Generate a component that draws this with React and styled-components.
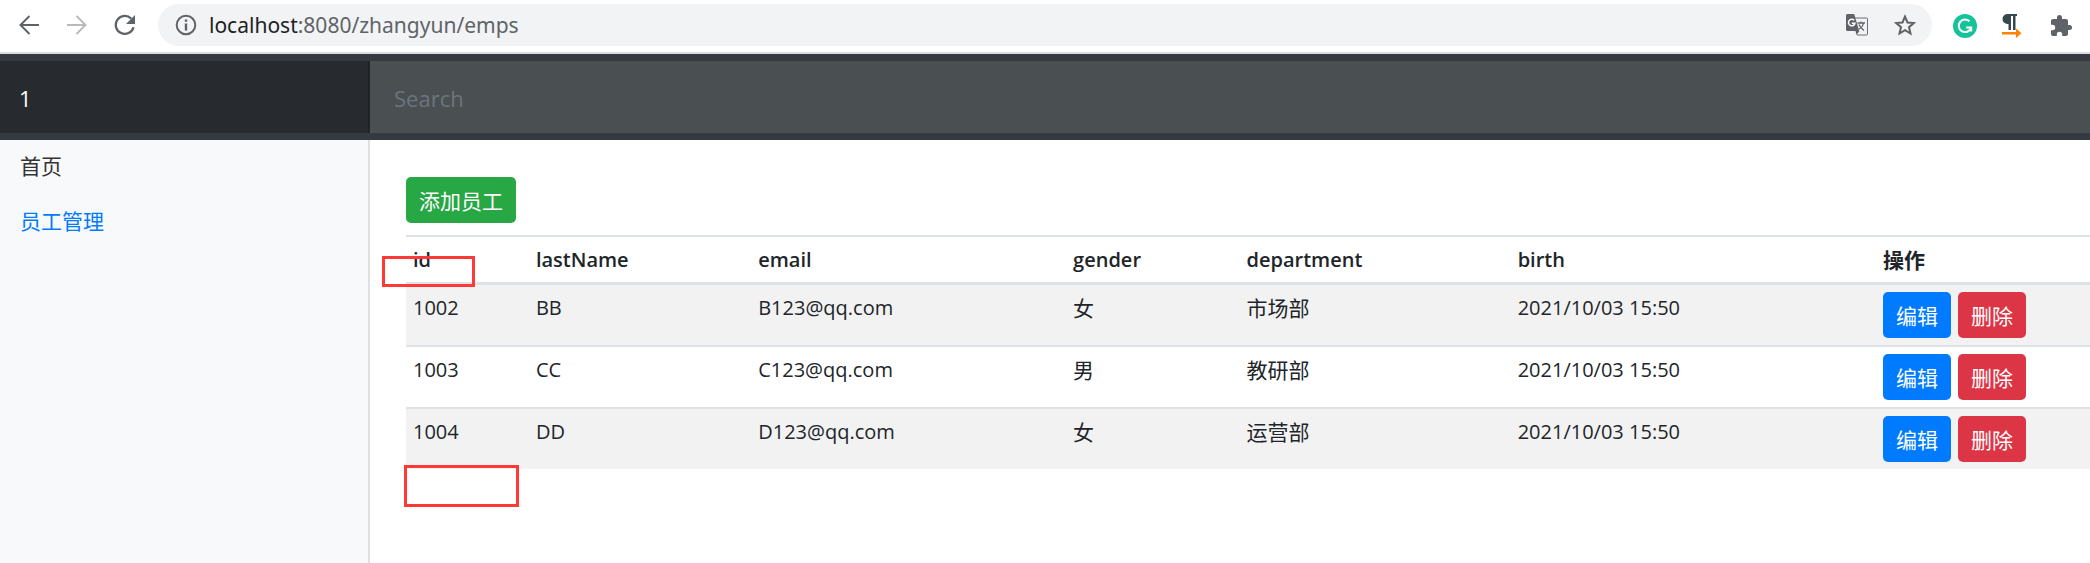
import React from "react";
import styled, { createGlobalStyle } from "styled-components";

const GlobalStyle = createGlobalStyle`
  *, *::before, *::after { box-sizing: border-box; }
  body {
    margin: 0;
    background: #fff;
    color: #212529;
    font-family: "Open Sans", "Noto Sans CJK SC", sans-serif;
    font-size: 20px;
    line-height: 32px;
  }
  #root { min-height: 100vh; display: flex; flex-direction: column; }
  button, input { font: inherit; }
`;

const BrowserBar = styled.header`
  display: flex;
  align-items: center;
  height: 54px;
  padding: 4px 19px 6px 18px;
  border-bottom: 2px solid #dadce4;
`;

const IconButton = styled.button`
  display: grid;
  place-items: center;
  flex: none;
  width: 22px;
  height: 22px;
  padding: 0;
  border: 0;
  background: none;
  color: ${(p) => (p.$muted ? "#bababa" : "#5f6368")};
  svg { display: block; flex: none; }
`;

const ButtonGroup = styled.div`
  display: flex;
  align-items: center;
  gap: 26px;
`;

const AddressBar = styled.form`
  display: flex;
  align-items: center;
  flex: 1;
  height: 42px;
  margin: 0 21px 0 22px;
  padding: 0 16px 0 17px;
  border-radius: 21px;
  background: #f1f3f4;
`;

const Address = styled.div`
  flex: 1;
  margin-left: 12px;
  font-family: "Noto Sans", sans-serif;
  font-size: 21px;
  color: #5f6368;
`;

const Host = styled.span`
  color: #202124;
`;

const Navbar = styled.nav`
  display: flex;
  padding: 7px 0;
  background: #343a40;
`;

const Brand = styled.a`
  flex: 0 0 370px;
  display: flex;
  align-items: center;
  padding: 2px 19px 0;
  border-right: 2px solid #212529;
  background: #272b30;
  color: #fff;
  font-size: 22px;
  text-decoration: none;
`;

const SearchInput = styled.input`
  flex: 1;
  min-width: 0;
  height: 72px;
  padding: 2px 24px 0;
  border: 0;
  outline: 0;
  background: #4a4f52;
  color: #fff;
  font-size: 22px;
  &::placeholder { color: #6c757d; opacity: 1; }
`;

const Body = styled.div`
  display: flex;
  flex: 1;
`;

const Sidebar = styled.aside`
  flex: 0 0 370px;
  border-right: 2px solid #dfe0e1;
  background: #f8f9fb;
`;

const SideLink = styled.a`
  display: block;
  padding: 10px 20px 13px;
  color: ${(p) => (p.$active ? "#007bff" : "#333")};
  font-size: 21px;
  text-decoration: none;
`;

const Main = styled.main`
  position: relative;
  flex: 1;
  min-width: 0;
  padding: 37px 0 0 36px;
`;

const tones = { add: "#28a745", edit: "#007bff", remove: "#dc3545" };

const Button = styled.button`
  display: block;
  height: 46px;
  padding: 1px 13px 0;
  border: 0;
  border-radius: 5px;
  background: ${(p) => tones[p.$tone]};
  color: #fff;
  font-size: 21px;
`;

const Actions = styled.div`
  display: flex;
  gap: 7px;
`;

const Table = styled.table`
  width: 100%;
  margin-top: 12px;
  border-spacing: 0;
  table-layout: fixed;
`;

const HeadCell = styled.th`
  width: ${(p) => p.$width};
  padding: 7px 7px 6px;
  border-top: 2px solid #dee2e6;
  border-bottom: 3px solid #dee2e6;
  font-weight: 600;
  text-align: left;
  &:lang(zh) { font-size: 21px; font-weight: 700; }
`;

const Row = styled.tr`
  &:nth-child(odd) { background: #f2f2f2; }
  & + & > td { border-top: 2px solid #dee2e6; }
`;

const Cell = styled.td`
  padding: 7px;
  vertical-align: top;
  &:lang(zh) { font-size: 21px; }
`;

const Marker = styled.div`
  position: absolute;
  left: ${(p) => p.$left}px;
  top: ${(p) => p.$top}px;
  width: ${(p) => p.$width}px;
  height: ${(p) => p.$height}px;
  border: 3px solid #ff3838;
  pointer-events: none;
`;

const columns = [
  { name: "id", width: "7.3%" },
  { name: "lastName", width: "13.2%" },
  { name: "email", width: "18.7%" },
  { name: "gender", width: "10.3%" },
  { name: "department", width: "16.1%" },
  { name: "birth", width: "21.7%" },
  { name: "操作", width: "auto", lang: "zh" },
];

const employees = [
  { id: 1002, lastName: "BB", email: "B123@qq.com", gender: "女", department: "市场部", birth: "2021/10/03 15:50" },
  { id: 1003, lastName: "CC", email: "C123@qq.com", gender: "男", department: "教研部", birth: "2021/10/03 15:50" },
  { id: 1004, lastName: "DD", email: "D123@qq.com", gender: "女", department: "运营部", birth: "2021/10/03 15:50" },
];

const Stroke = ({ children }) => (
  <svg width="22" height="22" viewBox="0 0 22 22" fill="none" stroke="currentColor" strokeWidth="2">
    {children}
  </svg>
);

const BackIcon = () => <Stroke><path d="M21 11H3M11.500 2 2.500 11l9 9" /></Stroke>;
const ForwardIcon = () => <Stroke><path d="M1 11h18M10.500 2l9 9-9 9" /></Stroke>;
const ReloadIcon = () => (
  <Stroke>
    <path d="M19.500 13.200A9 9 0 1 1 17.300 4.700" strokeWidth="2.300" />
    <path d="M21 1v9h-9z" fill="currentColor" stroke="none" />
  </Stroke>
);
const InfoIcon = () => (
  <Stroke>
    <circle cx="11" cy="11" r="9.300" />
    <path d="M11 9.500v7M11 5.500v2.300" strokeWidth="2.400" />
  </Stroke>
);
const TranslateIcon = () => (
  <svg width="22" height="22" viewBox="0 0 22 22" fill="none">
    <path d="M9 4h11.500a1 1 0 0 1 1 1v15a1 1 0 0 1-1 1H11" stroke="#6b6f73" />
    <path d="M1.500 0h6.700l5 17H1.500A1.500 1.500 0 0 1 0 15.500v-14A1.500 1.500 0 0 1 1.500 0z" fill="#5f6368" />
    <path d="M9.500 17h4l-3 4z" fill="#5f6368" />
    <path d="M8.200 6.300A3.300 3.300 0 1 0 9 9.200H5.800" stroke="#fff" strokeWidth="1.500" />
    <path d="M11.500 9h7.500M15 7.500V9M17.500 9c-.5 3-2.500 5-4.500 6M13 10.500c1 2.500 3 4.500 5 6" stroke="#5f6368" strokeWidth="1.300" />
  </svg>
);
const StarIcon = () => (
  <Stroke>
    <path d="M11 2.600l2.500 5.900 6.300.5-4.800 4.200 1.500 6.300L11 16.200l-5.500 3.300L7 13.200 2.200 9l6.300-.5z" />
  </Stroke>
);
const GrammarIcon = () => (
  <svg width="24" height="24" viewBox="0 0 24 24" fill="none">
    <circle cx="12" cy="12" r="12" fill="#15c39a" />
    <path d="M16.500 7.300A6.300 6.300 0 1 0 17.500 15M13.200 13.600h5v4" stroke="#fff" strokeWidth="2" />
  </svg>
);
const ParagraphIcon = () => (
  <svg width="20" height="24" viewBox="0 0 20 24">
    <path d="M5.500 0H15v2h-1.500v14H11V2H9v14H6.500V10H5.500a5 5 0 0 1 0-10z" fill="#37474f" />
    <path d="M0 18h14v-3.500l5.500 4.800-5.500 4.700v-3.500H0z" fill="#ff8200" />
  </svg>
);
const PuzzleIcon = () => (
  <svg width="24" height="24" viewBox="0 0 24 24" fill="currentColor">
    <path d="M20.500 11H19V7c0-1.100-.9-2-2-2h-4V3.500a2.500 2.500 0 0 0-5 0V5H4c-1.100 0-2 .9-2 2v3.800h1.500a2.700 2.700 0 0 1 0 5.400H2V20c0 1.100.9 2 2 2h3.800v-1.500a2.700 2.700 0 0 1 5.400 0V22H17c1.100 0 2-.9 2-2v-4h1.500a2.500 2.500 0 0 0 0-5z" />
  </svg>
);

export default function App() {
  return (
    <>
      <GlobalStyle />
      <BrowserBar>
        <ButtonGroup>
          <IconButton type="button" aria-label="Back"><BackIcon /></IconButton>
          <IconButton type="button" aria-label="Forward" $muted><ForwardIcon /></IconButton>
          <IconButton type="button" aria-label="Reload"><ReloadIcon /></IconButton>
        </ButtonGroup>
        <AddressBar>
          <IconButton type="button" aria-label="Site information"><InfoIcon /></IconButton>
          <Address><Host>localhost</Host>:8080/zhangyun/emps</Address>
          <ButtonGroup>
            <IconButton type="button" aria-label="Translate"><TranslateIcon /></IconButton>
            <IconButton type="button" aria-label="Bookmark"><StarIcon /></IconButton>
          </ButtonGroup>
        </AddressBar>
        <ButtonGroup>
          <IconButton type="button" aria-label="Grammar"><GrammarIcon /></IconButton>
          <IconButton type="button" aria-label="Text direction"><ParagraphIcon /></IconButton>
          <IconButton type="button" aria-label="Extensions"><PuzzleIcon /></IconButton>
        </ButtonGroup>
      </BrowserBar>
      <Navbar>
        <Brand href="#">1</Brand>
        <SearchInput type="text" placeholder="Search" aria-label="Search" />
      </Navbar>
      <Body>
        <Sidebar>
          <SideLink href="#">首页</SideLink>
          <SideLink href="#" $active>员工管理</SideLink>
        </Sidebar>
        <Main>
          <Button type="button" $tone="add">添加员工</Button>
          <Table>
            <thead>
              <tr>
                {columns.map((c) => (
                  <HeadCell key={c.name} $width={c.width} lang={c.lang}>{c.name}</HeadCell>
                ))}
              </tr>
            </thead>
            <tbody>
              {employees.map((e) => (
                <Row key={e.id}>
                  <Cell>{e.id}</Cell>
                  <Cell>{e.lastName}</Cell>
                  <Cell>{e.email}</Cell>
                  <Cell lang="zh">{e.gender}</Cell>
                  <Cell lang="zh">{e.department}</Cell>
                  <Cell>{e.birth}</Cell>
                  <Cell>
                    <Actions>
                      <Button type="button" $tone="edit">编辑</Button>
                      <Button type="button" $tone="remove">删除</Button>
                    </Actions>
                  </Cell>
                </Row>
              ))}
            </tbody>
          </Table>
          <Marker $left={12} $top={116} $width={93} $height={31} />
          <Marker $left={34} $top={325} $width={115} $height={42} />
        </Main>
      </Body>
    </>
  );
}
